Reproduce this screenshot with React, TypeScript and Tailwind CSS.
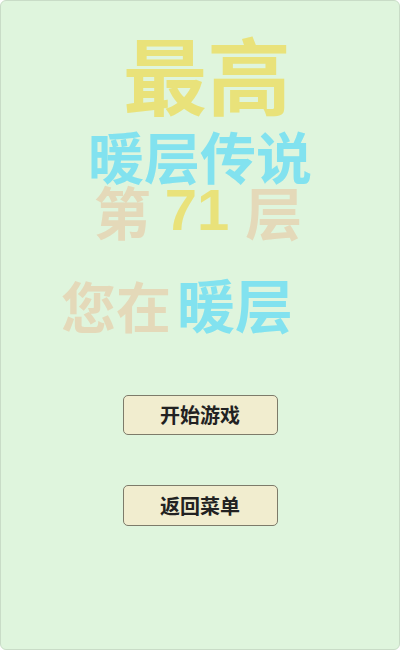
import React from 'react';

const font = { fontFamily: '"Noto Sans CJK SC", "Noto Sans", sans-serif' };

export default function App() {
    return (
        <div className="w-[400px] h-[650px] bg-[#dff5dd] border border-[#c9dcc7] rounded-[6px] flex flex-col items-center" style={font}>
            {/* title block */}
            <div className="mt-[30px] text-[84px] font-bold leading-none text-[#e9e27a] pl-[14px]">最高</div>
            <div className="mt-[12px] text-[56px] font-bold leading-none text-[#82e2ef]">暖层传说</div>
            <div className="-mt-[2px] text-[57px] font-bold leading-none text-[#e4d9b9] -ml-[4px] flex items-center gap-[14px]">
                <span>第</span>
                <span className="text-[#e9e27a] text-[58px] mr-[2px]" style={{ fontFamily: '"Liberation Sans", Arial, sans-serif' }}>71</span>
                <span>层</span>
            </div>

            <div className="mt-[35px] self-start ml-[60px] font-bold leading-none flex items-end gap-[6px]">
                <span className="text-[55px] text-[#e4d9b9]">您在</span>
                <span className="text-[58px] text-[#82e2ef]">暖层</span>
            </div>

            {/* buttons */}
            <button className="mt-[63px] w-[155px] h-[40px] bg-[#f1edcf] border border-[#7d7b6a] rounded-[5px] text-[20px] font-bold text-[#222]">开始游戏</button>
            <button className="mt-[50px] w-[155px] h-[41px] bg-[#f1edcf] border border-[#7d7b6a] rounded-[5px] text-[20px] font-bold text-[#222]">返回菜单</button>
        </div>
    );
}
